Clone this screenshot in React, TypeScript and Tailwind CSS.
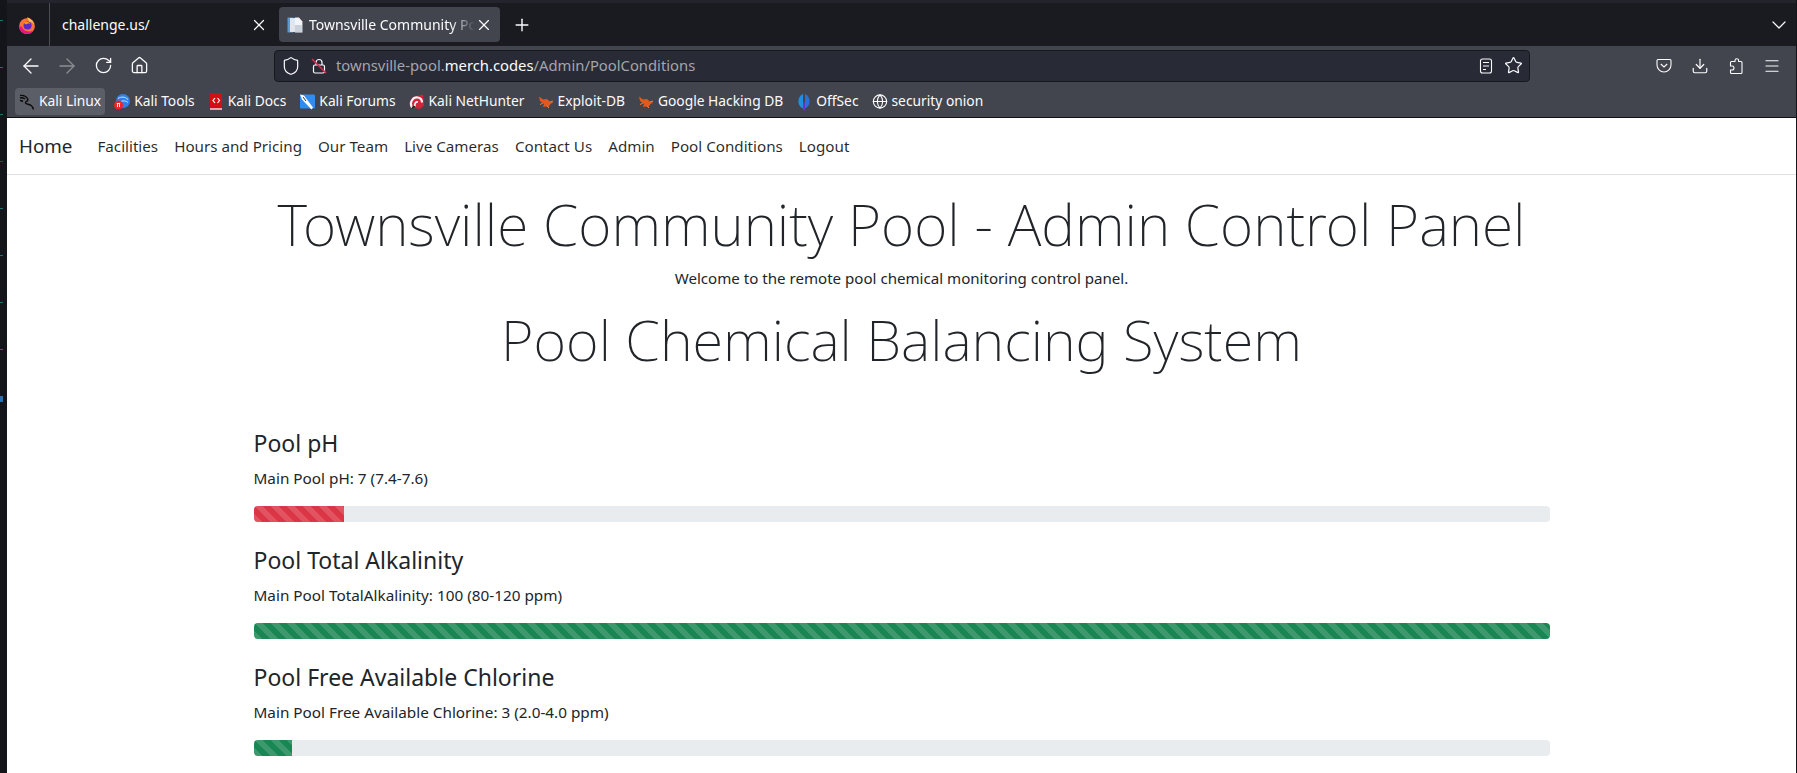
import React from 'react';
import { ArrowLeft, ArrowRight, RotateCw, Home, Shield, Plus, X, ChevronDown, Star, Download, Menu, Globe } from 'lucide-react';

const STRIPES =
  'bg-[linear-gradient(45deg,rgba(255,255,255,.15)_25%,transparent_25%,transparent_50%,rgba(255,255,255,.15)_50%,rgba(255,255,255,.15)_75%,transparent_75%,transparent)] bg-[length:16px_16px]';

function FirefoxIcon() {
  return (
    <svg width="18" height="18" viewBox="0 0 16 16">
      <circle cx="8" cy="9" r="7" fill="#ff7139" />
      <path d="M1 9a7 7 0 0 0 13 3.5C11 15 5 14 3.5 9.5L1 9z" fill="#e31587" />
      <circle cx="8.5" cy="8.5" r="3.6" fill="#592acb" />
      <path d="M8 1c3 1 6 3 6.500 7.500C14 6 12 5 10 5c-.5-1.500-1.500-2.500-2-4z" fill="#ffbd4f" />
      <path d="M5 6c2-1.500 5-1 6 1-1.500-.5-3-.5-4 .5L5 6z" fill="#ff980e" />
    </svg>
  );
}

function PageIcon() {
  return (
    <svg width="16" height="16" viewBox="0 0 16 16">
      <rect x="0.5" y="0.5" width="6" height="15" fill="#5a9bd5" />
      <rect x="3" y="1" width="9" height="14" fill="#dfe6ee" />
      <path d="M8 0.5h4l3.500 4v11H8z" fill="#f2f4f7" />
      <rect x="8" y="8" width="7" height="7" fill="#c9d2dc" />
    </svg>
  );
}

function LockIcon() {
  return (
    <svg width="16" height="16" viewBox="0 0 16 16" fill="none">
      <rect x="2.5" y="7" width="11" height="8" rx="1.5" stroke="#fbfbfe" strokeWidth="1.2" />
      <path d="M5 7V4.500a3 3 0 0 1 6 0V7" stroke="#fbfbfe" strokeWidth="1.2" />
      <path d="M1 1l14 14" stroke="#e22850" strokeWidth="1.5" />
    </svg>
  );
}

function ReaderIcon() {
  return (
    <svg width="14" height="16" viewBox="0 0 14 16" fill="none" stroke="#fbfbfe" strokeWidth="1.1">
      <rect x="1.5" y="1" width="11" height="14" rx="2" />
      <path d="M4 4.500h6M4 8h6M4 11.500h3" />
    </svg>
  );
}

function PocketIcon() {
  return (
    <svg width="16" height="16" viewBox="0 0 16 16" fill="none" stroke="#fbfbfe" strokeWidth="1.1">
      <path d="M2 1.500h12a1 1 0 0 1 1 1V7a7 7 0 0 1-14 0V2.500a1 1 0 0 1 1-1z" />
      <path d="M4.800 6l3.200 3 3.200-3" />
    </svg>
  );
}

function PuzzleIcon() {
  return (
    <svg width="16" height="16" viewBox="0 0 16 16" fill="none" stroke="#fbfbfe" strokeWidth="1.1">
      <path d="M7 3.500V2.500a1.800 1.800 0 0 1 3.600 0v1h2.400a1 1 0 0 1 1 1V14.500a1 1 0 0 1-1 1H3.500a1 1 0 0 1-1-1V12H4a2 2 0 0 0 0-4H2.500V4.500a1 1 0 0 1 1-1z" />
    </svg>
  );
}

function KaliIcon() {
  return (
    <svg width="18" height="18" viewBox="0 0 16 16" fill="none" stroke="#0d0d0d" strokeWidth="1.4">
      <path d="M1 1.500c3-.5 6 .5 7.500 3C10 7 7 7 6.500 8.500c-.5 1.500 3 1.500 5 2.500 1.500 1 2.500 2.500 3 4.500" />
      <path d="M1 4c2-.5 3.500 0 5 1" />
      <path d="M1 6.500c1 0 2 .5 3 1" />
    </svg>
  );
}

function KaliToolsIcon() {
  return (
    <svg width="17" height="17" viewBox="0 0 16 16">
      <circle cx="9" cy="7.5" r="7" fill="#2f80e8" />
      <path d="M4 5c3-2 7-2 10 1M7 8c2-1 5-1 7 1" stroke="#cfe4fb" strokeWidth="1" fill="none" />
      <circle cx="4.5" cy="11.5" r="4.5" fill="#e8242c" />
      <path d="M2.800 10h3.400M3.500 10v3.500M5.500 10v3.500" stroke="#fff" strokeWidth="0.9" />
    </svg>
  );
}

function KaliDocsIcon() {
  return (
    <svg width="16" height="17" viewBox="0 0 16 17">
      <rect x="2" y="0" width="12" height="15" rx="1" fill="#d40f14" />
      <rect x="2" y="15" width="12" height="2" fill="#e9a5a5" />
      <path d="M7 5L5 7.500 7 10M9.500 5L11.500 7.500 9.500 10" stroke="#fff" strokeWidth="1.2" fill="none" />
    </svg>
  );
}

function KaliForumsIcon() {
  return (
    <svg width="17" height="17" viewBox="0 0 16 16">
      <rect x="1" y="1" width="15" height="14" rx="1" fill="#2f8cf0" />
      <path d="M1 1l4 1 9 12-1.500 2L3 6z" fill="#fff" />
      <path d="M4 3.500l3 4" stroke="#333" strokeWidth="1" />
    </svg>
  );
}

function NetHunterIcon() {
  return (
    <svg width="17" height="17" viewBox="0 0 16 16">
      <path d="M3 4L14 1l1 11-4 3.500L2 14z" fill="#d4243a" />
      <path d="M3 14C0 9 4 3 9 4c3 .5 4 3 4 5" stroke="#f4f4f4" strokeWidth="2.2" fill="none" />
      <path d="M6 13c-1-3 1-5 3-4.500" stroke="#f4f4f4" strokeWidth="1.8" fill="none" />
      <path d="M3 14l3-1" stroke="#222" strokeWidth="1.5" />
    </svg>
  );
}

function ExploitIcon() {
  return (
    <svg width="16" height="16" viewBox="0 0 16 16">
      <path d="M1 2.500l4 3 4-.5 3.500 3 3 .5-3 1.500-2 3-3-.5-2.500.5 1-3L2 7z" fill="#e5571b" />
      <path d="M12 8l3-1M9 12l2 2M5 9l-3 1.500" stroke="#f0803f" strokeWidth="1" />
    </svg>
  );
}

function OffSecIcon() {
  return (
    <svg width="17" height="19" viewBox="0 0 16 18">
      <path d="M7 1.500A8 8 0 0 0 7 16z" fill="#1f8fe0" />
      <path d="M9 1.500A8 8 0 0 1 9 16z" fill="#2b6fd8" />
      <path d="M7 10h2v8H7z" fill="#6a33c8" />
    </svg>
  );
}

const bookmarks = [
  { label: 'Kali Linux', icon: <KaliIcon />, active: true },
  { label: 'Kali Tools', icon: <KaliToolsIcon /> },
  { label: 'Kali Docs', icon: <KaliDocsIcon /> },
  { label: 'Kali Forums', icon: <KaliForumsIcon /> },
  { label: 'Kali NetHunter', icon: <NetHunterIcon /> },
  { label: 'Exploit-DB', icon: <ExploitIcon /> },
  { label: 'Google Hacking DB', icon: <ExploitIcon /> },
  { label: 'OffSec', icon: <OffSecIcon /> },
  { label: 'security onion', icon: <Globe size={17} strokeWidth={1.2} absoluteStrokeWidth color="#fbfbfe" /> },
];

const navLinks = ['Facilities', 'Hours and Pricing', 'Our Team', 'Live Cameras', 'Contact Us', 'Admin', 'Pool Conditions', 'Logout'];

const chemicals = [
  { title: 'Pool pH', text: 'Main Pool pH: 7 (7.4-7.6)', width: 7, color: 'bg-[#dc3545]' },
  { title: 'Pool Total Alkalinity', text: 'Main Pool TotalAlkalinity: 100 (80-120 ppm)', width: 100, color: 'bg-[#198754]' },
  { title: 'Pool Free Available Chlorine', text: 'Main Pool Free Available Chlorine: 3 (2.0-4.0 ppm)', width: 3, color: 'bg-[#198754]' },
];

function TabBar() {
  return (
    <div className="flex h-[43px] items-center bg-[#1a1b20] text-[14px] text-[#fbfbfe]">
      <div className="flex h-full w-[43px] shrink-0 items-center justify-center border-r border-[#4a4d55] pr-[2px]">
        <FirefoxIcon />
      </div>
      <div className="flex w-[229px] shrink-0 items-center justify-between pl-[12px] pr-[11px]">
        <span>challenge.us/</span>
        <X size={18} strokeWidth={1.2} absoluteStrokeWidth />
      </div>
      <div className="flex h-[35px] w-[221px] shrink-0 items-center rounded-[4px] bg-[#42454d] pl-[8px] pr-[7px]">
        <PageIcon />
        <span className="ml-[6px] w-[167px] overflow-hidden whitespace-nowrap [mask-image:linear-gradient(to_right,black_85%,transparent)]">
          Townsville Community Pool - Admin Control Panel
        </span>
        <X size={18} strokeWidth={1.2} absoluteStrokeWidth className="ml-auto" />
      </div>
      <Plus size={20} strokeWidth={1.4} absoluteStrokeWidth className="ml-[12px]" />
      <ChevronDown size={24} strokeWidth={1.2} absoluteStrokeWidth className="ml-auto mr-[5px]" />
    </div>
  );
}

function ToolButton({ children }: { children: React.ReactNode }) {
  return <div className="flex w-[36px] justify-center">{children}</div>;
}

function NavBar() {
  return (
    <div className="flex h-[38px] items-center bg-[#42454d] pt-[1px] text-[#fbfbfe]">
      <div className="flex w-[267px] shrink-0 items-center pl-[6px]">
        <ToolButton><ArrowLeft size={24} strokeWidth={1.3} absoluteStrokeWidth /></ToolButton>
        <ToolButton><ArrowRight size={24} strokeWidth={1.3} absoluteStrokeWidth className="opacity-40" /></ToolButton>
        <ToolButton><RotateCw size={19} strokeWidth={1.3} absoluteStrokeWidth /></ToolButton>
        <ToolButton><Home size={19} strokeWidth={1.3} absoluteStrokeWidth /></ToolButton>
      </div>
      <div className="flex h-[32px] w-[1256px] shrink-0 items-center rounded-[4px] border border-[#17181c] bg-[#282a36] pl-[6px] pr-[6px]">
        <Shield size={20} strokeWidth={1.2} absoluteStrokeWidth />
        <span className="ml-[10px]"><LockIcon /></span>
        <span className="ml-[9px] text-[14.8px] text-[#a4a5ab]">
          townsville-pool.<span className="text-[#fbfbfe]">merch.codes</span>/Admin/PoolConditions
        </span>
        <span className="ml-auto"><ReaderIcon /></span>
        <Star size={19} strokeWidth={1.2} absoluteStrokeWidth className="ml-[11px]" />
      </div>
      <div className="ml-auto flex items-center pr-[6px]">
        <ToolButton><PocketIcon /></ToolButton>
        <ToolButton><Download size={18} strokeWidth={1.2} absoluteStrokeWidth /></ToolButton>
        <ToolButton><PuzzleIcon /></ToolButton>
        <ToolButton><Menu size={18} strokeWidth={1.2} absoluteStrokeWidth /></ToolButton>
      </div>
    </div>
  );
}

function BookmarksBar() {
  return (
    <div className="flex h-[34px] items-center gap-[5px] border-b border-[#0f1013] bg-[#42454d] pl-[8px] pt-[2px] text-[13.8px] text-[#fbfbfe]">
      {bookmarks.map(b => (
        <div
          key={b.label}
          className={`flex h-[27px] items-center gap-[4px] rounded-[4px] px-[4px] ${b.active ? 'bg-[#5b5e66]' : ''}`}
        >
          <span className="flex w-[16px] justify-center">{b.icon}</span>
          <span>{b.label}</span>
        </div>
      ))}
    </div>
  );
}

export default function App() {
  return (
    <div className="flex h-[773px] w-[1797px] overflow-hidden bg-[#14151a] [font-family:'Noto_Sans',sans-serif]">
      <div className="flex w-[7px] shrink-0 flex-col gap-[46px] pt-[20px]">
        <span className="h-[1px] w-[3px] bg-[#1f6f6a]" />
        <span className="h-[1px] w-[3px] bg-[#1f6f6a]" />
        <span className="h-[1px] w-[3px] bg-[#1f6f6a]" />
        <span className="h-[1px] w-[3px] bg-[#7a2a30]" />
        <span className="h-[1px] w-[3px] bg-[#1f6f6a]" />
        <span className="h-[1px] w-[3px] bg-[#1f6f6a]" />
        <span className="h-[1px] w-[3px] bg-[#1f6f6a]" />
        <span className="h-[1px] w-[3px] bg-[#1f6f6a]" />
        <span className="h-[6px] w-[3px] bg-[#2a6fb0]" />
      </div>
      <div className="flex w-[1789px] shrink-0 flex-col">
        <div className="h-[3px] bg-[#23242c]" />
        <TabBar />
        <NavBar />
        <BookmarksBar />
        <div className="flex-1 overflow-hidden bg-white text-[#212529]">
          <nav className="flex h-[57px] items-center border-b border-[#dee2e6] pl-[12px]">
            <span className="mr-[25px] text-[18.8px]">Home</span>
            <div className="flex gap-[16px]">
              {navLinks.map(l => (
                <span key={l} className="text-[15.2px] text-[#000000d9]">{l}</span>
              ))}
            </div>
          </nav>
          <div className="mx-auto w-[1320px] px-[12px] text-center">
            <h1 className="mt-[16px] text-[57px] font-extralight leading-[67px]">Townsville Community Pool - Admin Control Panel</h1>
            <p className="mt-[8px] text-[15.1px] leading-[24px]">Welcome to the remote pool chemical monitoring control panel.</p>
            <h1 className="mt-[16px] text-[56px] font-extralight leading-[67px]">Pool Chemical Balancing System</h1>
          </div>
          <div className="mx-auto mt-[56px] w-[1296px]">
            {chemicals.map(c => (
              <section key={c.title} className="mb-[24px]">
                <h4 className="mb-[8px] text-[23px] leading-[29px]">{c.title}</h4>
                <p className="mb-[16px] text-[15.3px] leading-[24px]">{c.text}</p>
                <div className="h-[16px] overflow-hidden rounded-[4px] bg-[#e9ecef]">
                  <div className={`h-full ${c.color} ${STRIPES}`} style={{ width: `${c.width}%` }} />
                </div>
              </section>
            ))}
          </div>
        </div>
      </div>
    </div>
  );
}
